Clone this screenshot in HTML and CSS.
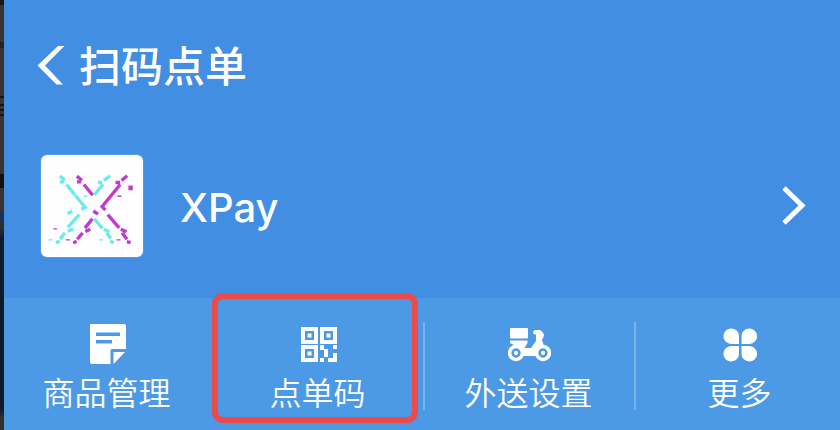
FILE: index.html
```html
<!DOCTYPE html>
<html lang="zh-CN">
<head>
<meta charset="utf-8">
<meta name="viewport" content="width=device-width, initial-scale=1">
<title>扫码点单</title>
<link rel="stylesheet" href="styles.css">
</head>
<body>
<div class="edge" aria-hidden="true"></div>
<main class="app">
  <header class="header">
    <button class="back" type="button" aria-label="返回">
      <svg width="28" height="40" viewBox="0 0 28 40"><path d="M21 0H27.500L8 19.500L26 38.500H19.500L.5 19.500Z" fill="#fff"/></svg>
    </button>
    <h1 class="title">扫码点单</h1>
  </header>
  <a class="shop" href="#shop">
    <span class="logo">
      <svg viewBox="35 33 304 304" fill="none" stroke-width="10">
        <g stroke="#6eeaea">
          <path d="M91 96L106 108M91 113H104M111 121L136 152M137 153L167 189L155 195M194 152L220 120M205 115H218M222 109L241 95M114 208L128 201M149 211L115 249M115 260L131 254M106 265L92 284M79 294L91 290M194 223L218 252M222 254L239 262M231 265L243 282M241 290L252 294"/>
          <path d="M162 156h11M57 286h12M208 286h12" stroke-width="4"/>
        </g>
        <g stroke="#c23bd0">
          <path d="M142 96L157 109M142 113H155M163 121L189 153M292 95L275 109M257 115H271M271 121L217 187L227 197M191 200L205 209M234 211L268 250M273 254L290 262M277 265L291 284M291 291L302 294M188 223L166 251M167 261L182 254M159 265L143 284M131 295L141 290"/>
          <path d="M302 124v14" stroke-width="13"/>
          <path d="M263 156h12M72 253h11M109 286h12M260 286h12" stroke-width="4"/>
        </g>
      </svg>
    </span>
    <span class="name">XPay</span>
    <svg class="arrow" width="24" height="40" viewBox="0 0 24 40"><path d="M2 2L20 19.500L2 37" fill="none" stroke="#fff" stroke-width="5"/></svg>
  </a>
  <nav class="menu">
    <a class="item" href="#goods">
      <svg class="icon" viewBox="0 0 44 44" fill="#fff"><path fill-rule="evenodd" d="M6 2H39Q41 2 41 4V27H27Q25.500 27 25.500 28.500V42H7Q5 42 5 40V3Q5 2 6 2ZM11 10.500V14H35V10.500ZM11 18V21.500H27V18Z"/><path d="M28.500 30H40L28.500 42Z"/></svg>
      <span>商品管理</span>
    </a>
    <a class="item active" href="#code">
      <svg class="icon" viewBox="0 0 44 44" fill="#fff"><path fill-rule="evenodd" d="M5 5h17v17H5ZM9 9v9h9V9ZM24 5h17v17H24ZM28 9v9h9V9ZM5 23h17v17H5ZM9 27v9h9v-9Z"/><path d="M11.500 11.500h4v4h-4ZM30.500 11.500h4v4h-4ZM11.500 29.500h4v4h-4ZM24 23h4v4h4v8h-4v-7h-4ZM37 23h4v4h-4ZM24 36h4v4h-4ZM37 31h4v9h-9v-4h5Z"/></svg>
      <span>点单码</span>
    </a>
    <a class="item" href="#delivery">
      <svg class="icon" viewBox="0 0 44 44" fill="#fff"><rect x="3" y="6" width="18" height="10.500" rx="1"/><path d="M3 18.500H20.500V21L17.500 26H24L29 19V12.500H28Q26 12.500 26 10.500T28 8H33Q37 10 37 14L35 18L37 24L36 34H9V24L3 21Z"/><circle cx="9" cy="31" r="8.200"/><circle cx="36" cy="31" r="8.200"/><g fill="none" stroke="#4c99e6" stroke-width="2.500"><circle cx="9" cy="31" r="3.400"/><circle cx="36" cy="31" r="3.400"/></g></svg>
      <span>外送设置</span>
    </a>
    <a class="item" href="#more">
      <svg class="icon" viewBox="0 0 44 44" fill="#fff"><path d="M21 22H13A7.800 7.800 0 1 1 21 14ZM23.500 22V14A7.800 7.800 0 1 1 31.500 22ZM21 24V31.500A7.800 7.800 0 1 1 13 24ZM23.500 24H31.500A7.800 7.800 0 1 1 23.500 31.500Z"/></svg>
      <span>更多</span>
    </a>
  </nav>
</main>
</body>
</html>
```
FILE: styles.css
```css
* { box-sizing: border-box; }

body {
  margin: 0;
  min-height: 100vh;
  display: flex;
  overflow: hidden;
  background: #418ee2;
  color: #fff;
  font-family: Inter, "Noto Sans CJK SC", sans-serif;
}

a { color: inherit; text-decoration: none; }
svg { display: block; }

.edge {
  flex: 0 0 4px;
  background: linear-gradient(#15181f 0 5px, #383531 5px 42px, #242320 42px 48px, #383531 48px 96px, #161514 96px 98px, #383531 98px 104px, #161514 104px 106px, #383531 106px 109px, #161514 109px 111px, #383531 111px 114px, #161514 114px 116px, #383531 116px 174px, #111 174px 188px, #383531 188px 212px, #173454 212px 222px, #2d2e30 222px 228px, #0c1a2a 238px 408px, #30302e 418px);
}

.app {
  flex: 1;
  min-width: 0;
  display: flex;
  flex-direction: column;
  overflow: hidden;
}

.header {
  display: flex;
  align-items: center;
  gap: 14px;
  height: 132px;
  padding-left: 33px;
}

.back {
  padding: 0;
  border: 0;
  background: none;
}

.title {
  margin: 0;
  padding-top: 2px;
  font-size: 42px;
  line-height: 60px;
  font-weight: 500;
}

.shop {
  display: flex;
  align-items: center;
  height: 166px;
  padding: 0 34px 18px 37px;
}

.logo {
  width: 102px;
  height: 102px;
  overflow: hidden;
  border-radius: 6px;
  background: #fefefe;
  box-shadow: 0 0 0 1px #509aea;
}

.name {
  flex: 1;
  margin-left: 37px;
  padding-top: 4px;
  font-size: 40px;
  line-height: 48px;
  font-weight: 500;
}

.menu {
  flex: 1;
  display: grid;
  grid-template-columns: repeat(4, 1fr);
  margin: 0 -5px 0 -3px;
  background: #4c99e6;
}

.item {
  position: relative;
  display: flex;
  flex-direction: column;
  align-items: center;
  gap: 4px;
  padding: 24px 0 12px;
  font-size: 32px;
  line-height: 48px;
  font-weight: 350;
}

.item + .item {
  background: linear-gradient(#7bb3ed, #7bb3ed) left 24px / 2px 88px no-repeat;
}

.item.active { background: none; }

.item.active::after {
  content: "";
  position: absolute;
  inset: -5px 5px 7px 0;
  border: 6px solid #ec4b4c;
  border-radius: 11px;
}

.icon {
  width: 44px;
  height: 44px;
}
```
